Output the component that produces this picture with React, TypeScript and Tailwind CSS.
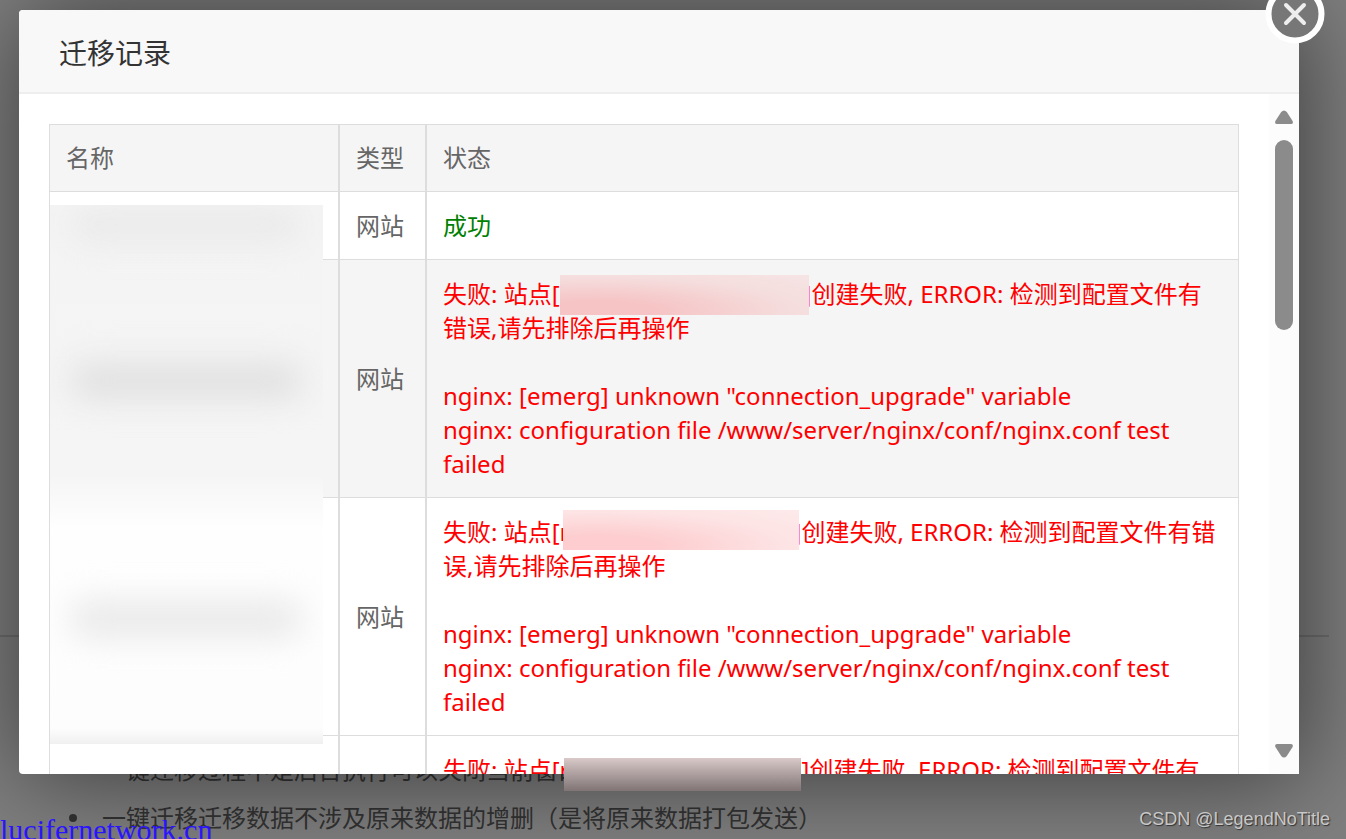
import React from 'react';

type MigrationRow = {
    type: string;
    ok: boolean;
    mask?: string;
    prefix?: string;
};

const rows: MigrationRow[] = [
    { type: "网站", ok: true },
    {
        type: "网站",
        ok: false,
        prefix: "[",
        mask: "-mt-[2px] w-[249px] -mr-[5px] bg-[radial-gradient(ellipse_at_15%_90%,#f6c4c5_20%,#f5dddd_65%,#f6e4e4)]",
    },
    {
        type: "网站",
        ok: false,
        prefix: "[r",
        mask: "-mt-[5px] w-[236px] -ml-[6px] -mr-[6px] bg-[radial-gradient(ellipse_at_15%_90%,#fdcdcf_20%,#fde3e4_65%,#fdeaea)]",
    },
    { type: "网站", ok: false, prefix: "[r", mask: "w-[238px] -ml-[6px]" },
];

const notes = [
    "一键迁移过程中是后台执行可以关闭当前窗口",
    "一键迁移迁移数据不涉及原来数据的增删（是将原来数据打包发送）",
];

const PageBehind: React.FC = () => (
    <div className="flex h-full flex-col justify-end bg-white">
        <hr className="mr-[17px] mb-[109px] border-t-2 border-[#ddd]" />
        <ul className="-mb-[3px] pl-[69px] text-2xl leading-[48px] text-[#666]">
            {notes.map((note) => (
                <li key={note} className="flex items-center gap-[25px] whitespace-nowrap">
                    <span className="size-2 rounded-full bg-[#666]" />
                    {note}
                </li>
            ))}
        </ul>
    </div>
);

const FailedStatus: React.FC<{ row: MigrationRow }> = ({ row }) => (
    <div className="text-[#ff0000]">
        <p>
            失败: 站点{row.prefix}
            <span className={`relative -mb-[8px] inline-block h-10 align-top ${row.mask}`} />
            ]创建失败, ERROR: 检测到配置文件有错误,请先排除后再操作
        </p>
        <br />
        <p>nginx: [emerg] unknown "connection_upgrade" variable</p>
        <p>nginx: configuration file /www/server/nginx/conf/nginx.conf test failed</p>
    </div>
);

const RecordTable: React.FC = () => (
    <div className="relative">
        <table className="w-full table-fixed border-separate border-spacing-0 border-l border-t border-[#ddd] text-left text-2xl leading-[34px] text-[#666]">
            <thead>
                <tr className="bg-[#f5f5f5]">
                    <th className="w-[290px] border-b border-r-2 border-[#ddd] p-4 font-normal">名称</th>
                    <th className="w-[87px] border-b border-r-2 border-[#ddd] p-4 font-normal whitespace-nowrap">类型</th>
                    <th className="border-b border-r border-[#ddd] p-4 font-normal">状态</th>
                </tr>
            </thead>
            <tbody>
                {rows.map((row, index) => (
                    <tr key={index} className={index === 1 ? "bg-[#f5f5f5]" : "bg-white"}>
                        <td className="border-b border-r-2 border-[#ddd]" />
                        <td className="border-b border-r-2 border-[#ddd] px-4 pt-[17px] pb-4 whitespace-nowrap">{row.type}</td>
                        <td className="border-b border-r border-[#ddd] px-4 pt-[17px] pb-4">
                            {row.ok ? <span className="text-[#008000]">成功</span> : <FailedStatus row={row} />}
                        </td>
                    </tr>
                ))}
            </tbody>
        </table>
        {/* blurred site names */}
        <div className="absolute top-[81px] left-px flex h-[539px] w-[273px] flex-col overflow-hidden bg-[linear-gradient(#f4f4f4_0%,#f5f5f5_50%,#fefefe_60%,#fdfdfd_97%,#f0f0f0_100%)] px-5">
            <div className="mt-1 h-8 rounded-full bg-[#e9e9e9] blur-lg" />
            <div className="mt-[122px] h-9 rounded-full bg-[#e0e0e0] blur-lg" />
            <div className="mt-[202px] h-9 rounded-full bg-[#e8e8e8] blur-lg" />
        </div>
    </div>
);

const ScrollRail: React.FC = () => (
    <div className="flex w-[30px] shrink-0 flex-col items-center bg-[#fcfcfc] py-4">
        <svg width="18" height="14" viewBox="0 0 18 14" fill="#8b8b8b">
            <path d="M6.2 2Q9-1.2 11.8 2L17.6 11Q18.6 14 16 14H2Q-.6 14 .4 11Z" />
        </svg>
        <div className="mt-4 h-[190px] w-[18px] rounded-full bg-[#8b8b8b]" />
        <svg className="mt-auto" width="18" height="14" viewBox="0 0 18 14" fill="#8b8b8b">
            <path d="M6.2 12Q9 15.2 11.8 12L17.6 3Q18.6 0 16 0H2Q-.6 0 .4 3Z" />
        </svg>
    </div>
);

const App: React.FC = () => {
    return (
        <div className="relative h-screen overflow-hidden font-['Noto_Sans','Noto_Sans_CJK_SC',sans-serif]">
            <PageBehind />
            <div className="absolute inset-0 flex bg-black/50 pt-[10px] pr-[47px] pb-[65px] pl-[19px]">
                <div role="dialog" aria-labelledby="title" className="relative flex min-w-0 flex-1 flex-col rounded-[4px] bg-white shadow-[2px_2px_100px_rgba(0,0,0,0.55)]">
                    <div className="rounded-t-[4px] border-b-2 border-[#eee] bg-[#f8f8f8] px-10 pt-[22px] pb-[18px]">
                        <h1 id="title" className="text-[28px] leading-[42px] text-[#333]">迁移记录</h1>
                    </div>
                    <div className="flex min-h-0 flex-1">
                        <div className="min-w-0 flex-1 overflow-hidden p-[30px]">
                            <RecordTable />
                        </div>
                        <ScrollRail />
                    </div>
                    <div className="absolute -bottom-[17px] left-[545px] h-[33px] w-[237px] bg-[linear-gradient(#d9c9c9,#807474)]" />
                    <button type="button" aria-label="关闭" className="absolute -top-[26px] -right-[26px] cursor-pointer">
                        <svg width="60" height="60" viewBox="0 0 60 60" fill="none" stroke="#fff" strokeLinecap="round">
                            <circle cx="30" cy="30" r="26.5" fill="#777" strokeWidth="6" />
                            <path d="M21 21L39 39M39 21L21 39" stroke="#eee" strokeWidth="4" />
                        </svg>
                    </button>
                </div>
            </div>
            <span className="absolute -bottom-[8px] left-0 font-['Liberation_Serif',serif] text-[30px] leading-[34px] text-[#2a14ff]">lucifernetwork.cn</span>
            <span className="absolute right-4 bottom-[8px] font-['Liberation_Sans',sans-serif] text-lg leading-6 text-[#c8c8c8] [text-shadow:1px_1px_1px_#333]">CSDN @LegendNoTitle</span>
        </div>
    );
};

export default App;
